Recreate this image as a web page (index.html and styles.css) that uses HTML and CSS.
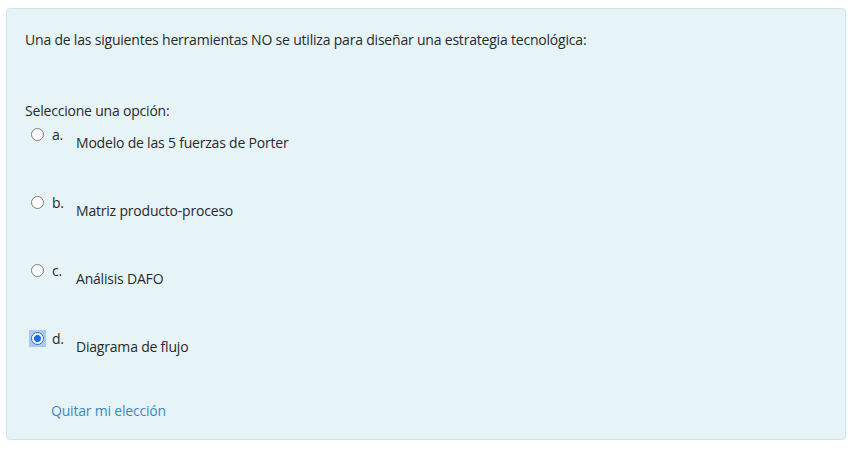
FILE: index.html
```html
<!DOCTYPE html>
<html lang="es">
<head>
<meta charset="utf-8">
<link rel="stylesheet" href="styles.css">
</head>
<body>
<div class="que">
  <div class="qtext">Una de las siguientes herramientas NO se utiliza para diseñar una estrategia tecnológica:</div>
  <div class="prompt">Seleccione una opción:</div>
  <div class="answers">
    <div class="option">
      <span class="radio-wrap"><span class="radio"></span></span>
      <span class="letter">a.</span>
      <span class="label">Modelo de las 5 fuerzas de Porter</span>
    </div>
    <div class="option">
      <span class="radio-wrap"><span class="radio"></span></span>
      <span class="letter">b.</span>
      <span class="label">Matriz producto-proceso</span>
    </div>
    <div class="option">
      <span class="radio-wrap"><span class="radio"></span></span>
      <span class="letter">c.</span>
      <span class="label">Análisis DAFO</span>
    </div>
    <div class="option">
      <span class="radio-wrap focused"><span class="radio checked"></span></span>
      <span class="letter">d.</span>
      <span class="label">Diagrama de flujo</span>
    </div>
  </div>
  <a class="clear" href="#">Quitar mi elección</a>
</div>
</body>
</html>
```
FILE: styles.css
```css
html, body {
  margin: 0;
  padding: 0;
  background: #ffffff;
}
body {
  font-family: "Open Sans", "Noto Sans", sans-serif;
  font-size: 14px;
  letter-spacing: -0.2px;
  color: #262a2e;
}
.que {
  box-sizing: border-box;
  margin: 8px 2px 0 6px;
  height: 432px;
  background: #e7f4f7;
  border: 1px solid #cfe7ec;
  border-radius: 4px;
  padding: 21px 18px 0 18px;
}
.qtext {
  line-height: 20px;
  height: 20px;
}
.prompt {
  margin-top: 51px;
  line-height: 20px;
}
.answers {
  display: flex;
  flex-direction: column;
  margin-top: 5px;
}
.option {
  display: flex;
  align-items: flex-start;
  height: 68px;
}
.radio-wrap {
  display: flex;
  align-items: center;
  justify-content: center;
  width: 17px;
  height: 17px;
  margin-left: 4px;
}
.radio-wrap.focused {
  background: #a9c9f2;
}
.radio {
  box-sizing: border-box;
  width: 13px;
  height: 13px;
  border-radius: 50%;
  border: 1px solid #7a7a7a;
  background: #ffffff;
}
.radio.checked {
  border: 1px solid #2a6fd6;
  background: radial-gradient(circle, #1b6fe0 0 3.3px, #ffffff 3.8px);
}
.letter {
  margin-left: 6px;
  width: 24px;
  flex: none;
  line-height: 17px;
}
.label {
  margin-top: 7px;
  line-height: 20px;
}
.clear {
  display: block;
  width: fit-content;
  margin-left: 26px;
  margin-top: 3px;
  color: #3a86cc;
  text-decoration: none;
  line-height: 20px;
}
```
